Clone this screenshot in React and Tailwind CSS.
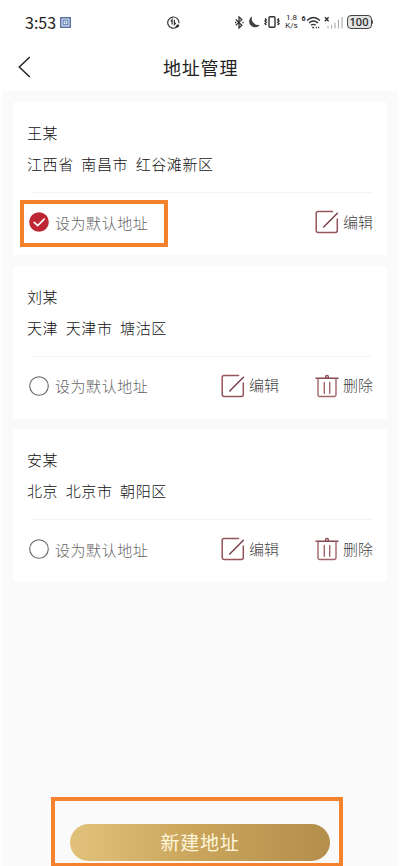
import React from 'react';

const addresses = [
  { name: '王某', region: '江西省 南昌市 红谷滩新区', isDefault: true },
  { name: '刘某', region: '天津 天津市 塘沽区', isDefault: false },
  { name: '安某', region: '北京 北京市 朝阳区', isDefault: false },
];

function StatusBar() {
  return (
    <div className="flex h-11 items-center pl-[25px] pr-[27px] font-normal text-[#222]">
      <span className="w-[31px] whitespace-nowrap font-['Noto_Sans_CJK_SC'] text-[16px] leading-5">3:53</span>
      <svg className="ml-[4px]" width="11" height="11" viewBox="0 0 11 11" fill="none">
        <rect x=".7" y=".7" width="9.6" height="9.6" fill="#c3d0ea" stroke="#536d9b" strokeWidth="1.3" />
        <rect x="3.2" y="3.2" width="4.6" height="4.4" fill="#dce5f6" stroke="#6682b8" />
        <path d="M5.5 4.3v2" stroke="#6682b8" />
      </svg>
      <svg className="ml-[96px]" width="13" height="13" viewBox="0 0 13 13" fill="none" stroke="#333" strokeWidth="1.2">
        <path d="M11.9 7.2A5.6 5.6 0 1 0 9.4 11.3" />
        <path d="M3.8 5.3l1.3-1.6v4.8M7.4 3.7v4.8l1.5-1.6" />
        <path d="M8.5 10.2l1.7-1.7h1.9v1.7l-1.7 1.6H8.8z" fill="#333" stroke="none" />
      </svg>
      <div className="ml-auto flex items-center">
        <svg width="9" height="13" viewBox="0 0 9 13" fill="none" stroke="#333" strokeWidth="1.3">
          <path d="M.8 3.5l6 5.8L4 12V1l2.8 2.6-6 5.8" />
          <path d="M8 5.7v1.6M.7 5.8v1.4" />
        </svg>
        <svg className="ml-[4px]" width="12" height="12" viewBox="0 0 12 12" fill="#3f3f3f">
          <path d="M4.1.3a5.9 5.9 0 1 0 7.7 8.6A6.6 6.6 0 0 1 4.1.3z" />
        </svg>
        <svg className="ml-[4px]" width="16" height="12" viewBox="0 0 16 12" fill="none" stroke="#333" strokeWidth="1.4">
          <rect x="5" y=".8" width="6" height="10.4" rx="1" />
          <path d="M1 2.5l1.3 1.2L1 5l1.3 1.3L1 7.6l1.3 1.3M15 2.5l-1.3 1.2L15 5l-1.3 1.3L15 7.6l-1.3 1.3" />
        </svg>
        <div className="ml-[5px] flex w-[14px] flex-col items-center whitespace-nowrap font-['Roboto'] text-[8px] leading-[8px]">
          <span className="block h-2">1.8</span>
          <span className="block h-2">K/s</span>
        </div>
        <span className="mb-[7px] ml-[3px] w-[4px] font-['Roboto'] text-[7px] font-bold leading-[8px]">6</span>
        <svg width="15" height="13" viewBox="0 0 15 13" fill="none" stroke="#333" strokeWidth="1.4">
          <path d="M1 4.4Q7.3-1.6 14 4.4M3 7Q7.4 3 12 7M5 9.3Q7.4 7.4 9.6 9.3" />
          <path d="M6.3 11.5h1.8M9.8 11.5H11M12 11.5h1.2" strokeWidth="1.7" />
        </svg>
        <svg className="ml-[3px]" width="19" height="13" viewBox="0 0 19 13" fill="none">
          <path d="M.9 1.2l3.7 4M4.6 1.2l-3.7 4" stroke="#333" strokeWidth="1.4" />
          <path d="M4 10v2.5M7.5 8.8v3.7M11 6.5v6M14.5 3.8v8.7M18 1v11.5" stroke="#aaa" strokeWidth="1.1" />
        </svg>
        <div className="ml-[4px] flex h-[14px] w-[25px] items-center justify-center rounded-[4px] border border-[#444] bg-[#e3e3e3] font-['Noto_Sans'] text-[11px] font-medium leading-3">100</div>
        <div className="h-1 w-[1.5px] rounded-r bg-[#555]" />
      </div>
    </div>
  );
}

function EditIcon() {
  return (
    <svg width="24" height="24" viewBox="0 0 24 24" fill="none" stroke="#96545d" strokeWidth="1.5" strokeLinecap="round">
      <path d="M17.5 1.5H3A1.8 1.8 0 0 0 1.2 3.3v17.3A1.8 1.8 0 0 0 3 22.4h17.5a1.8 1.8 0 0 0 1.8-1.8V9" />
      <path d="M22.4 3.2L8.7 17" stroke="#78414b" />
    </svg>
  );
}

function TrashIcon() {
  return (
    <svg width="24" height="24" viewBox="0 0 24 24" fill="none" stroke="#a2646b" strokeWidth="1.4" strokeLinecap="round">
      <path d="M1 4.2h22" stroke="#86464f" />
      <path d="M10.7 3.8V2.7a1.3 1.3 0 0 1 2.6 0v1.1" stroke="#86464f" />
      <path d="M3 4.5v16.3A1.7 1.7 0 0 0 4.7 22.5h14.6a1.7 1.7 0 0 0 1.7-1.7V4.5" />
      <path d="M9.3 8.5v10.8M14.7 8.5v10.8" />
    </svg>
  );
}

function Action({ icon, label }) {
  return (
    <button className="flex h-6 w-[60px] items-center gap-[4px]">
      {icon}
      <span className="-mt-px whitespace-nowrap text-[15px] leading-5 text-[#444]">{label}</span>
    </button>
  );
}

function DefaultChoice({ checked }) {
  return (
    <div
      className={
        checked
          ? 'flex h-[47px] w-[148px] items-center border-[4px] border-[#f4812c] pb-[3px] pl-[5px]'
          : 'flex h-[47px] w-[148px] items-center pb-[3px] pl-[9px]'
      }
    >
      <svg className="shrink-0" width="20" height="20" viewBox="0 0 20 20" fill="none">
        {checked ? (
          <>
            <circle cx="10" cy="10" r="9.8" fill="#bd2632" />
            <path d="M5.2 10.4l3.5 3.2 6.5-6.4" stroke="#fff" strokeWidth="1.7" strokeLinecap="round" />
          </>
        ) : (
          <circle cx="10" cy="10" r="9.3" stroke="#666" strokeWidth="1.1" />
        )}
      </svg>
      <span className="ml-[6px] mt-px whitespace-nowrap text-[15px] leading-5 tracking-[0.55px] text-[#666]">设为默认地址</span>
    </div>
  );
}

function AddressCard({ item }) {
  return (
    <section className="h-[153px] rounded-[2px] bg-white">
      <div className="h-[90px] pl-[14px] pt-[20px] text-[15px] leading-[22px] tracking-[0.6px] text-[#111]">
        <div>{item.name}</div>
        <div className="mt-[9px] whitespace-nowrap [word-spacing:3.6px]">{item.region}</div>
      </div>
      <div className="ml-[18px] mr-[14px] h-px bg-[#f4f4f4]" />
      <div className="mt-[7px] flex items-center justify-between pl-[7px] pr-[12px]">
        <DefaultChoice checked={item.isDefault} />
        <div className="flex gap-[34px] pb-[3px]">
          <Action icon={<EditIcon />} label="编辑" />
          {!item.isDefault && <Action icon={<TrashIcon />} label="删除" />}
        </div>
      </div>
    </section>
  );
}

export default function App() {
  return (
    <div className="flex h-[866px] w-[400px] flex-col overflow-hidden bg-white font-['Noto_Sans_CJK_SC',sans-serif] font-light">
      <StatusBar />
      <header className="flex h-[47px] items-center pb-[2px]">
        <svg className="ml-[18px]" width="13" height="22" viewBox="0 0 13 22" fill="none" stroke="#222" strokeWidth="1.5">
          <path d="M11.8 1L1.3 11l10.5 10" />
        </svg>
        <h1 className="ml-[132px] text-[18px] font-normal leading-6 tracking-[0.8px] text-[#222]">地址管理</h1>
      </header>
      <main className="mx-[2px] flex min-h-0 flex-1 flex-col bg-[#fafafa]">
        <div className="flex flex-col gap-[10.5px] px-[11px] pt-[11px]">
          {addresses.map((item) => (
            <AddressCard key={item.name} item={item} />
          ))}
        </div>
        <div className="ml-[49px] mt-[215px] h-[70px] w-[292px] shrink-0 border-[4px] border-[#f4812c] px-[15px] pt-[23px]">
          <button className="flex h-[37px] w-[260px] items-center justify-center rounded-full bg-linear-to-r from-[#e2c27b] via-[#c9a45a] to-[#b48e4c] text-[19px] font-normal tracking-[0.8px] text-[#fff6dd]">
            新建地址
          </button>
        </div>
      </main>
    </div>
  );
}
